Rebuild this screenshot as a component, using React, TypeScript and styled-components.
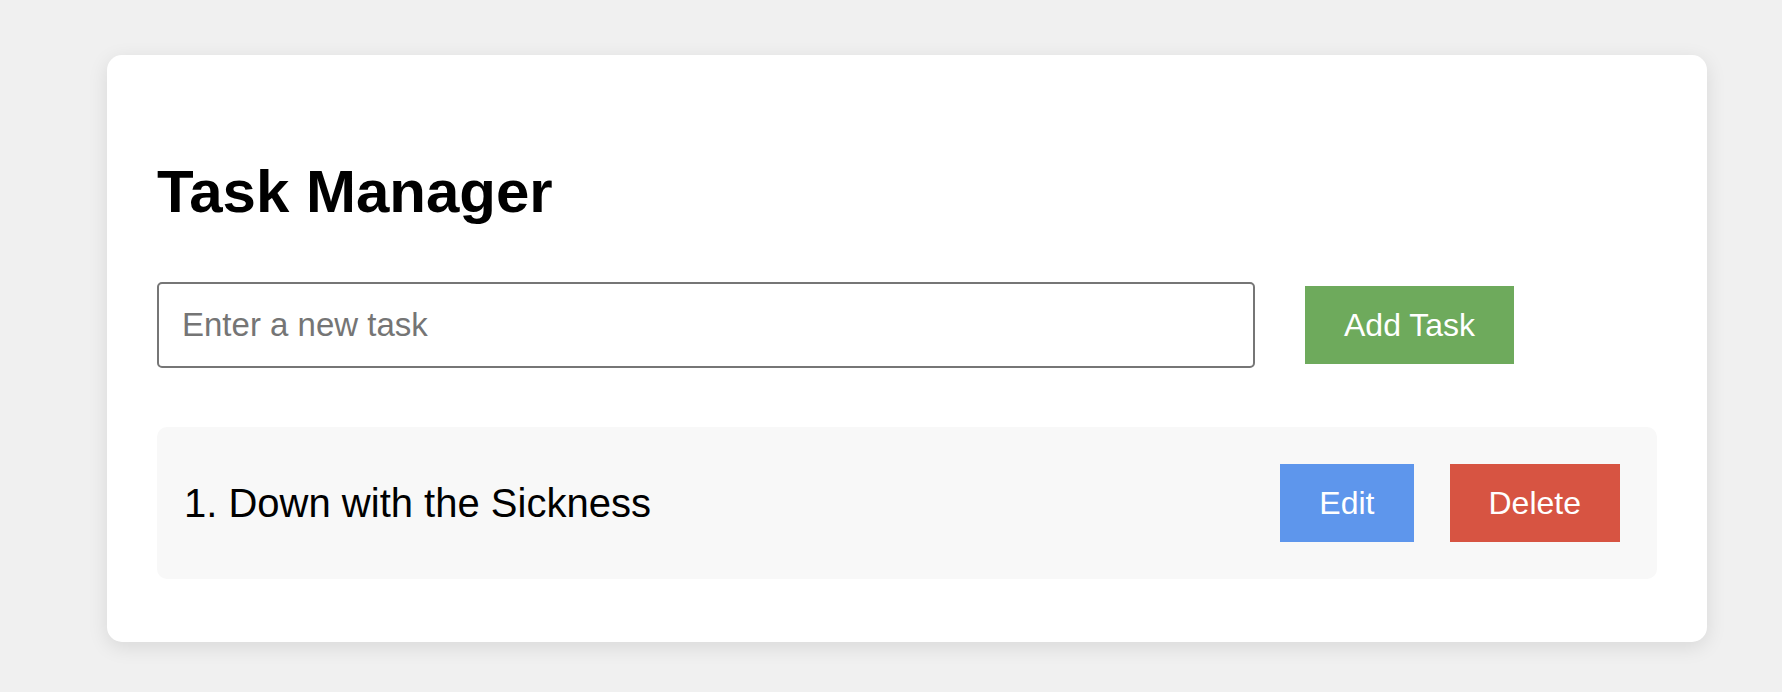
import React, { useState } from "react";
import styled, { createGlobalStyle } from "styled-components";

const GlobalStyle = createGlobalStyle`
  html, body {
    margin: 0;
    padding: 0;
    background: #f0f0f0;
    font-family: "Liberation Sans", Arial, sans-serif;
  }
`;

const Page = styled.div`
  padding: 55px 0 50px 107px;
`;

const Card = styled.div`
  width: 1600px;
  box-sizing: border-box;
  background: #ffffff;
  border-radius: 15px;
  padding: 50px 50px 50px;
  box-shadow: 0 5px 20px rgba(0, 0, 0, 0.1);
`;

const Title = styled.h1`
  margin: 52px 0 56px;
  font-size: 60px;
  line-height: 69px;
  font-weight: 700;
  color: #000;
`;

const InputRow = styled.div`
  display: flex;
  align-items: center;
  gap: 50px;
  margin-bottom: 59px;
`;

const TaskInput = styled.input`
  width: 1098px;
  height: 86px;
  box-sizing: border-box;
  border: 2px solid #767676;
  border-radius: 5px;
  padding: 0 23px;
  font-family: "Liberation Sans", Arial, sans-serif;
  font-size: 33px;
  color: #000;
  outline: none;
  &::placeholder {
    color: #757575;
  }
`;

const Button = styled.button<{ $bg: string }>`
  height: 78px;
  border: none;
  border-radius: 0;
  padding: 0 39px;
  background: ${(p) => p.$bg};
  color: #ffffff;
  font-family: "Liberation Sans", Arial, sans-serif;
  font-size: 32px;
  cursor: pointer;
`;

const TaskList = styled.ul`
  list-style: none;
  margin: 0 0 13px;
  padding: 0;
`;

const TaskItem = styled.li`
  display: flex;
  align-items: center;
  justify-content: space-between;
  height: 152px;
  box-sizing: border-box;
  padding: 0 37px 0 27px;
  background: #f8f8f8;
  border-radius: 10px;
`;

const TaskText = styled.span`
  font-size: 40px;
  color: #000;
`;

const Actions = styled.div`
  display: flex;
  gap: 36px;
`;

export default function App() {
  const [tasks] = useState<string[]>(["Down with the Sickness"]);
  return (
    <>
      <GlobalStyle />
      <Page>
        <Card>
          <Title>Task Manager</Title>
          <InputRow>
            <TaskInput placeholder="Enter a new task" />
            <Button $bg="#6eaa5c">Add Task</Button>
          </InputRow>
          <TaskList>
            {tasks.map((t, i) => (
              <TaskItem key={i}>
                <TaskText>
                  {i + 1}. {t}
                </TaskText>
                <Actions>
                  <Button $bg="#5e96ec">Edit</Button>
                  <Button $bg="#d75442">Delete</Button>
                </Actions>
              </TaskItem>
            ))}
          </TaskList>
        </Card>
      </Page>
    </>
  );
}
